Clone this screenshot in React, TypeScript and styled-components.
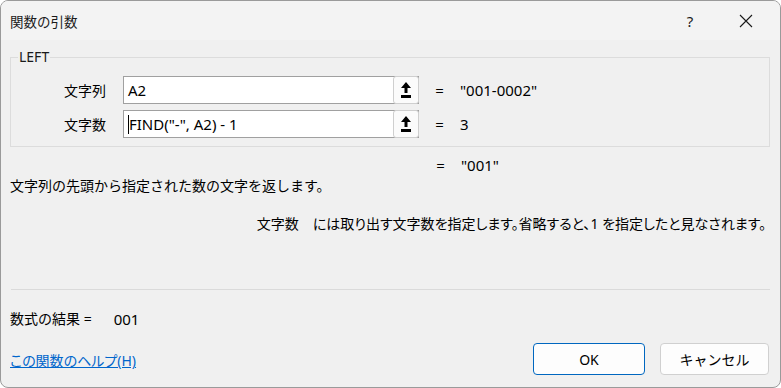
import styled, { createGlobalStyle } from "styled-components";

const GlobalStyle = createGlobalStyle`
  html, body {
    margin: 0;
    padding: 0;
    background: #ffffff;
  }
  body {
    font-family: "Noto Sans", "Noto Sans CJK JP", sans-serif;
    color: #000000;
  }
`;

interface ArgRow {
  label: string;
  formula: string;
  value: string;
  focused?: boolean;
}

const args: ArgRow[] = [
  { label: "文字列", formula: "A2", value: '"001-0002"' },
  { label: "文字数", formula: 'FIND("-", A2) - 1', value: "3", focused: true },
];

const UploadIcon = () => (
  <svg width="12" height="17" viewBox="0 0 12 17">
    <path d="M6 0 L11 6 L7.5 6 L7.5 11 L4.5 11 L4.5 6 L1 6 Z" fill="#000" />
    <rect x="1" y="13" width="10" height="3" fill="#000" />
  </svg>
);

const CloseIcon = () => (
  <svg width="14" height="14" viewBox="0 0 14 14">
    <path d="M1 1 L13 13 M13 1 L1 13" stroke="#1a1a1a" strokeWidth="1.1" />
  </svg>
);

const App = () => {
  return (
    <>
      <GlobalStyle />
      <Window>
        <TitleBar>
          <Title>関数の引数</Title>
          <Controls>
            <HelpMark>?</HelpMark>
            <CloseButton>
              <CloseIcon />
            </CloseButton>
          </Controls>
        </TitleBar>

        <Body>
          <Group>
            <Legend>LEFT</Legend>
            {args.map((arg) => (
              <Row key={arg.label}>
                <Label>{arg.label}</Label>
                <InputBox>
                  <InputText>
                    {arg.focused && <Caret />}
                    {arg.formula}
                  </InputText>
                  <RefButton>
                    <UploadIcon />
                  </RefButton>
                </InputBox>
                <Equals>=</Equals>
                <Value>{arg.value}</Value>
              </Row>
            ))}
          </Group>

          <ResultRow>
            <Equals>=</Equals>
            <Value>"001"</Value>
          </ResultRow>

          <Description>文字列の先頭から指定された数の文字を返します。</Description>

          <ArgDescription>
            <ArgName>文字数</ArgName>
            には取り出す文字数を指定します。省略すると、1 を指定したと見なされます。
          </ArgDescription>

          <Separator />

          <FormulaResult>
            数式の結果 =<ResultValue>001</ResultValue>
          </FormulaResult>

          <Footer>
            <HelpLink href="#">この関数のヘルプ(H)</HelpLink>
            <Buttons>
              <DialogButton primary>OK</DialogButton>
              <DialogButton>キャンセル</DialogButton>
            </Buttons>
          </Footer>
        </Body>
      </Window>
    </>
  );
};

export default App;

const Window = styled.div`
  width: 781px;
  height: 388px;
  box-sizing: border-box;
  border: 1px solid #9a9a9a;
  border-radius: 8px;
  overflow: hidden;
  background: #f0f0f0;
  display: flex;
  flex-direction: column;
  font-size: 14px;
`;

const TitleBar = styled.div`
  height: 39px;
  flex-shrink: 0;
  display: flex;
  align-items: center;
  justify-content: space-between;
  background: #f3f3f3;
  padding-left: 9px;
`;

const Title = styled.div`
  font-size: 13.5px;
  color: #1a1a1a;
  margin-top: 1px;
`;

const Controls = styled.div`
  display: flex;
  align-items: center;
  height: 100%;
`;

const HelpMark = styled.div`
  width: 46px;
  text-align: center;
  font-size: 15px;
  color: #1a1a1a;
  margin-right: 10px;
`;

const CloseButton = styled.div`
  width: 46px;
  height: 100%;
  display: flex;
  align-items: center;
  justify-content: center;
  margin-right: 11px;
`;

const Body = styled.div`
  flex: 1;
  display: flex;
  flex-direction: column;
  padding: 0 10px 0 9px;
`;

const Group = styled.fieldset`
  margin: 8px 0 0 0;
  padding: 10px 0 8px 0;
  border: 1px solid #dcdcdc;
  display: flex;
  flex-direction: column;
  gap: 6px;
  min-width: 0;
`;

const Legend = styled.legend`
  padding: 0 1px;
  margin-left: 7px;
  font-size: 14px;
  line-height: 18px;
  color: #1a1a1a;
`;

const Row = styled.div`
  display: flex;
  align-items: center;
  height: 28px;
  padding-left: 53px;
`;

const Label = styled.div`
  width: 59px;
  flex-shrink: 0;
  font-size: 14px;
`;

const InputBox = styled.div`
  width: 296px;
  height: 28px;
  box-sizing: border-box;
  border: 1px solid #a0a0a0;
  background: #ffffff;
  display: flex;
  align-items: center;
`;

const InputText = styled.div`
  flex: 1;
  padding-left: 4px;
  font-size: 15px;
  display: flex;
  align-items: center;
  white-space: pre;
`;

const Caret = styled.span`
  display: inline-block;
  width: 1px;
  height: 19px;
  background: #000;
`;

const RefButton = styled.div`
  width: 26px;
  height: 28px;
  margin: -1px -1px -1px 0;
  box-sizing: border-box;
  border: 1px solid #cfcfcf;
  border-radius: 3px;
  background: #fbfbfb;
  display: flex;
  align-items: center;
  justify-content: center;
`;

const Equals = styled.div`
  width: 41px;
  flex-shrink: 0;
  text-align: center;
  font-size: 15px;
`;

const Value = styled.div`
  font-size: 15px;
`;

const ResultRow = styled.div`
  display: flex;
  align-items: center;
  height: 20px;
  margin-top: 8px;
  padding-left: 410px;
`;

const Description = styled.div`
  margin-top: 1px;
  line-height: 20px;
`;

const ArgDescription = styled.div`
  margin-top: 18px;
  line-height: 20px;
  text-align: right;
  padding-right: 4px;
  font-feature-settings: "palt";
`;

const ArgName = styled.span`
  margin-right: 14px;
`;

const Separator = styled.div`
  height: 1px;
  background: #dadada;
  margin-top: 55px;
  margin-left: 1px;
`;

const FormulaResult = styled.div`
  margin-top: 19px;
  line-height: 20px;
  display: flex;
  align-items: center;
`;

const ResultValue = styled.span`
  margin-left: 22px;
  font-size: 15px;
`;

const Footer = styled.div`
  margin-top: 14px;
  display: flex;
  align-items: center;
  justify-content: space-between;
`;

const HelpLink = styled.a`
  color: #0066cc;
  text-decoration: underline;
  font-size: 14px;
  margin-top: 2px;
  font-feature-settings: "palt";
`;

const Buttons = styled.div`
  display: flex;
  gap: 15px;
  margin-right: 1px;
`;

const DialogButton = styled.button<{ primary?: boolean }>`
  width: ${({ primary }) => (primary ? "112px" : "109px")};
  height: 32px;
  box-sizing: border-box;
  border-radius: 4px;
  border: 1px solid ${({ primary }) => (primary ? "#0067c0" : "#d0d0d0")};
  background: #fdfdfd;
  font-family: "Noto Sans", "Noto Sans CJK JP", sans-serif;
  font-size: 14px;
  color: #000;
  padding: 0;
`;
